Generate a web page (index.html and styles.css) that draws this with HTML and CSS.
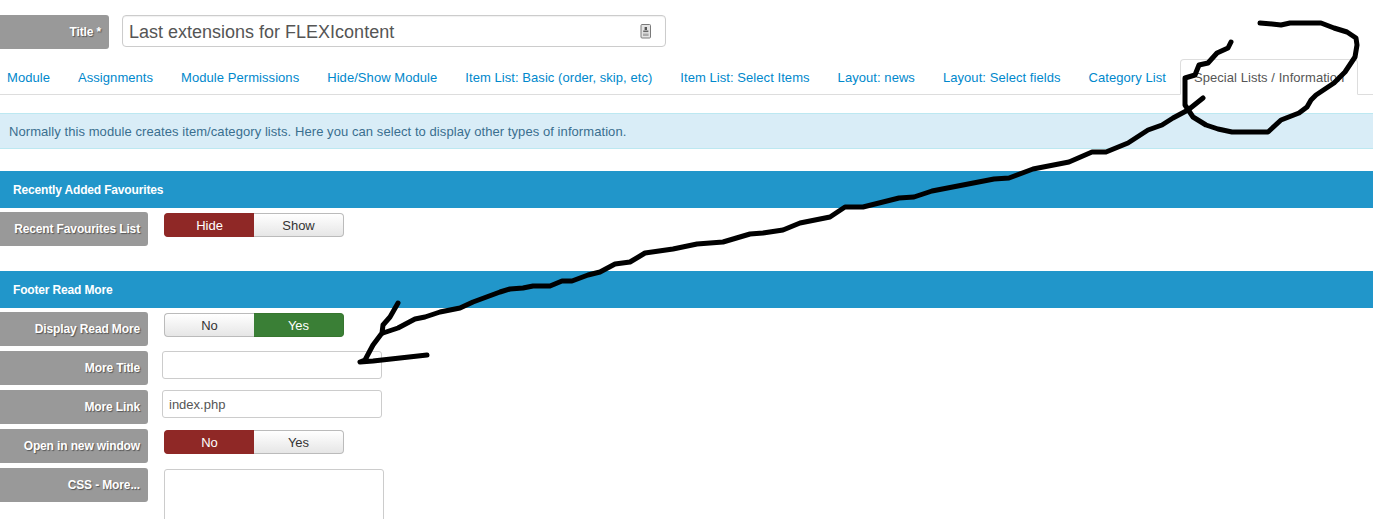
FILE: index.html
```html
<!DOCTYPE html>
<html lang="en">
<head>
<meta charset="utf-8">
<title>Module editor</title>
<link rel="stylesheet" href="styles.css">
</head>
<body>
<div class="page">
  <div class="title-row">
    <label class="label label-title">Title *</label>
    <div class="title-input">
      <span class="title-text">Last extensions for FLEXIcontent</span>
      <svg class="lang-icon" width="11" height="15" viewBox="0 0 11 15">
        <rect x="1" y="0.5" width="9.5" height="13.5" rx="1" fill="#e4e4e4" stroke="#7a7a7a"/>
        <rect x="4.6" y="3" width="2.4" height="3" fill="#555"/>
        <rect x="3.2" y="6.5" width="5.2" height="1.6" fill="#666"/>
        <rect x="3" y="9.5" width="5.6" height="2.5" fill="#aaa"/>
      </svg>
    </div>
  </div>
  <ul class="tabs">
    <li class="tab">Module</li>
    <li class="tab">Assignments</li>
    <li class="tab">Module Permissions</li>
    <li class="tab">Hide/Show Module</li>
    <li class="tab">Item List: Basic (order, skip, etc)</li>
    <li class="tab">Item List: Select Items</li>
    <li class="tab">Layout: news</li>
    <li class="tab">Layout: Select fields</li>
    <li class="tab">Category List</li>
    <li class="tab active">Special Lists / Information</li>
  </ul>
  <div class="info">Normally this module creates item/category lists. Here you can select to display other types of information.</div>

  <div class="bar bar-first">Recently Added Favourites</div>
  <div class="row">
    <label class="label">Recent Favourites List</label>
    <div class="toggle"><span class="opt red">Hide</span><span class="opt">Show</span></div>
  </div>

  <div class="bar bar-second">Footer Read More</div>
  <div class="row">
    <label class="label">Display Read More</label>
    <div class="toggle"><span class="opt">No</span><span class="opt green">Yes</span></div>
  </div>
  <div class="row">
    <label class="label">More Title</label>
    <div class="text-input"></div>
  </div>
  <div class="row">
    <label class="label">More Link</label>
    <div class="text-input">index.php</div>
  </div>
  <div class="row">
    <label class="label">Open in new window</label>
    <div class="toggle"><span class="opt red">No</span><span class="opt">Yes</span></div>
  </div>
  <div class="row">
    <label class="label">CSS - More...</label>
    <div class="textarea"></div>
  </div>
</div>
<svg class="scribble" width="1373" height="519" viewBox="0 0 1373 519">
  <path d="M1260 23L1272 24L1281 25L1290 23L1321 23L1334 28L1347 32L1356 38L1357 45L1355 57L1345 72L1334 83L1316 95L1311 100L1307 107L1299 113L1281 120L1268 132L1232 132L1218 129L1206 125L1193 117L1185 105L1185 78L1195 75L1199 65L1208 63L1217 53L1228 48L1231 42"/>
  <path d="M1203 98L1188 110L1173 118L1162 125L1148 130L1128 143L1106 152L1092 152L1069 162L1033 169L1009 178L994 179L963 185L932 191L914 197L899 198L863 207L845 207L830 217L800 223L783 230L763 233L750 234L723 242L697 244L673 249L645 253L630 262L615 264L600 272L588 275L572 281L562 281L550 286L533 286L523 288L510 289L500 292L473 302L460 308L440 312L425 317L415 319L398 328L383 333"/>
  <path d="M398 303L390 317L383 325L382 333L373 345L365 360L360 362L373 361L427 355"/>
</svg>
</body>
</html>
```
FILE: styles.css
```css
html, body {
  margin: 0;
  padding: 0;
  height: 519px;
  overflow: hidden;
  background: #fff;
  font-family: "Liberation Sans", Arial, sans-serif;
  font-size: 12px;
  color: #333;
}
.page {
  padding-top: 15px;
}
.title-row {
  display: flex;
  align-items: flex-start;
  gap: 13px;
}
.label {
  box-sizing: border-box;
  flex: none;
  width: 148px;
  height: 34px;
  padding-right: 8px;
  border-radius: 0 3px 3px 0;
  background: #999;
  color: #fff;
  font-weight: bold;
  font-size: 12px;
  letter-spacing: -.13px;
  line-height: 34px;
  text-align: right;
  text-shadow: 1px 1px 1px rgba(0, 0, 0, .45);
}
.label-title {
  width: 109px;
}
.title-input {
  box-sizing: border-box;
  display: flex;
  align-items: center;
  justify-content: space-between;
  width: 544px;
  height: 32px;
  padding: 0 14px 0 6px;
  border: 1px solid #ccc;
  border-radius: 4px;
  font-size: 18px;
  color: #555;
  box-shadow: inset 0 1px 1px rgba(0, 0, 0, .06);
}
.title-text {
  padding-top: 2px;
}
.lang-icon {
  display: block;
}
.tabs {
  display: flex;
  box-sizing: border-box;
  height: 36px;
  margin: 10px 0 0;
  padding: 0;
  list-style: none;
  border-bottom: 1px solid #ddd;
}
.tab {
  flex: none;
  box-sizing: border-box;
  height: 36px;
  padding: 0 13px;
  border: 1px solid transparent;
  color: #0088cc;
  font-size: 13px;
  letter-spacing: .06px;
  line-height: 35px;
  white-space: nowrap;
}
.tab:first-child {
  margin-left: -7px;
}
.tab.active {
  border-color: #ddd #ddd #fff;
  border-radius: 4px 4px 0 0;
  background: #fff;
  color: #555;
}
.info {
  box-sizing: border-box;
  height: 36px;
  margin-top: 18px;
  padding: 0 9px;
  border-top: 1px solid #bce8f1;
  border-bottom: 1px solid #bce8f1;
  background: #d9edf7;
  color: #3a6f8f;
  font-size: 13px;
  letter-spacing: .07px;
  line-height: 35px;
}
.bar {
  height: 37px;
  padding-left: 13px;
  background: #2196ca;
  color: #fff;
  font-weight: bold;
  font-size: 12px;
  letter-spacing: -.16px;
  line-height: 38px;
}
.bar-first {
  margin-top: 22px;
}
.bar-second {
  margin-top: 25px;
}
.row {
  display: flex;
  align-items: flex-start;
  margin-top: 5px;
}
.bar + .row {
  margin-top: 4px;
}
.toggle {
  display: flex;
  box-sizing: border-box;
  width: 180px;
  height: 24px;
  margin: 1px 0 0 16px;
}
.opt {
  box-sizing: border-box;
  width: 90px;
  height: 24px;
  border: 1px solid #bbb;
  background: linear-gradient(#fff, #e6e6e6);
  color: #333;
  font-size: 13px;
  line-height: 23px;
  text-align: center;
}
.opt:first-child {
  border-radius: 4px 0 0 4px;
  border-right: 0;
}
.opt:last-child {
  border-radius: 0 4px 4px 0;
  border-left: 0;
}
.opt.red {
  border-color: #8f2826;
  background: #8f2826;
  color: #fff;
}
.opt.green {
  border-color: #37762f;
  background: #3a7f36;
  color: #fff;
}
.text-input {
  box-sizing: border-box;
  width: 220px;
  height: 28px;
  margin-left: 14px;
  padding: 0 6px;
  border: 1px solid #ccc;
  border-radius: 3px;
  color: #555;
  font-size: 13px;
  line-height: 27px;
}
.textarea {
  box-sizing: border-box;
  width: 220px;
  height: 70px;
  margin: 1px 0 0 16px;
  border: 1px solid #ccc;
  border-radius: 3px;
}
.scribble {
  position: absolute;
  left: 0;
  top: 0;
  pointer-events: none;
}
.scribble path {
  fill: none;
  stroke: #000;
  stroke-width: 5;
  stroke-linecap: round;
  stroke-linejoin: round;
}
```
